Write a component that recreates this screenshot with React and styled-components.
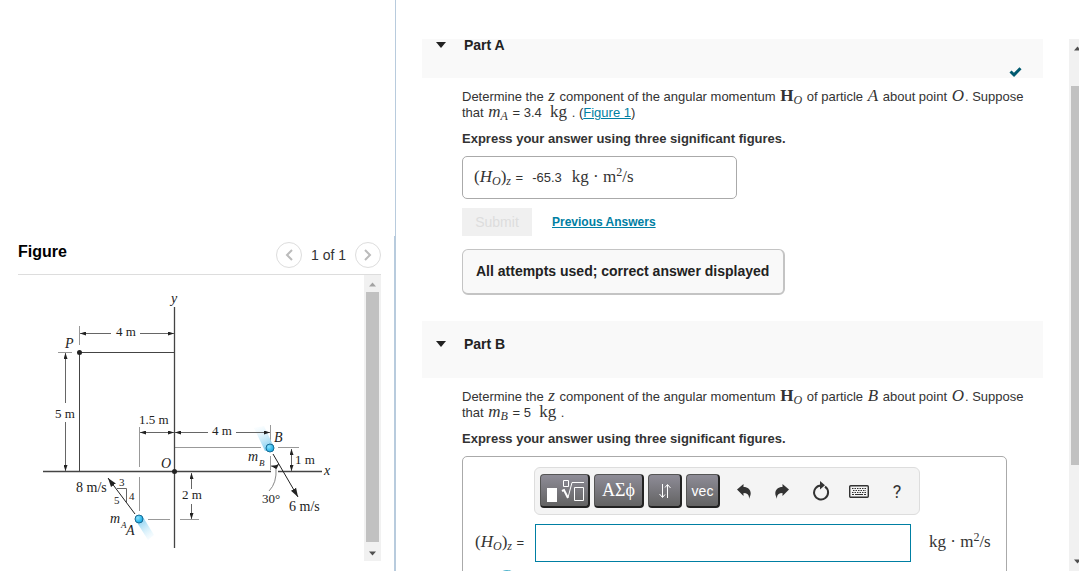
import React, { useState } from "react";
import styled, { createGlobalStyle } from "styled-components";

const GlobalStyle = createGlobalStyle`
  * {
    box-sizing: border-box;
  }

  body {
    margin: 0;
    background: #fff;
    color: #333;
    font-family: "Liberation Sans", Arial, sans-serif;
    font-size: 13px;
    line-height: 16px;
    overflow: hidden;
  }
`;

const Page = styled.div`
  display: flex;
  height: 100vh;
  padding-right: 4px;
  overflow: hidden;
`;

const FigurePane = styled.aside`
  flex: 0 0 396px;
  display: flex;
  flex-direction: column;
  border-right: 1px solid #b8cbdd;
  padding-top: 236px;
`;

const FigureBody = styled.div`
  flex: 1;
  display: flex;
  flex-direction: column;
  padding: 0 13px 10px 18px;
  border-right: 1px solid #b8cbdd;
`;

const FigureHeader = styled.header`
  display: flex;
  align-items: center;
  justify-content: space-between;
  height: 39px;
  border-bottom: 1px solid #ddd;
`;

const FigureTitle = styled.h2`
  margin: 0;
  padding-bottom: 6px;
  color: #000;
  font-size: 16px;
  line-height: 20px;
`;

const Pager = styled.nav`
  display: flex;
  align-items: center;
  gap: 9px;
  font-size: 14px;
`;

const PagerButton = styled.button`
  width: 26px;
  height: 26px;
  display: grid;
  place-items: center;
  padding: 0;
  border: 1px solid #ddd;
  border-radius: 50%;
  background: #fff;
`;

const FigureScroll = styled.div`
  flex: 1;
  display: flex;
  justify-content: space-between;
`;

const Diagram = styled.svg`
  width: 345px;
  height: 285px;
  flex: none;
  font-family: "Liberation Serif", "Times New Roman", serif;
  font-size: 13px;
  fill: #222;
`;

const ScrollTrack = styled.div`
  width: 17px;
  flex: none;
  display: flex;
  flex-direction: column;
  align-items: center;
  background: #f1f1f1;
  padding: 7px 2px 5px;
`;

const PageScrollTrack = styled(ScrollTrack)`
  width: 10px;
  align-items: flex-end;
  margin-top: 39px;
  padding: 7px 0 7px 2px;
`;

const ScrollThumb = styled.div`
  width: 100%;
  flex: 1;
  margin: ${(props) => props.gap};
  background: #c1c1c1;
`;

const ScrollArrow = styled.svg`
  height: 5px;
  flex: none;
  fill: ${(props) => (props.$muted ? "#a3a3a3" : "#505050")};
`;

const Content = styled.main`
  flex: 1;
  min-width: 0;
  padding: 39px 26px 0;
`;

const Part = styled.section`
  margin-bottom: 26px;
`;

const PartHeader = styled.header`
  display: flex;
  align-items: flex-start;
  justify-content: space-between;
  height: ${(props) => (props.$cut ? 39 : 57)}px;
  padding: ${(props) => (props.$cut ? "0" : "17px")} 21px 0 14px;
  background: #f9f9f9;
`;

const PartToggle = styled.button`
  display: flex;
  align-items: center;
  gap: 18px;
  padding: 0;
  border: 0;
  background: none;
  color: #222;
  font: bold 14px/12px "Liberation Sans", Arial, sans-serif;
`;

const DoneMark = styled.svg`
  align-self: flex-end;
  margin-bottom: 1px;
`;

const PartBody = styled.div`
  padding: 11px 16px 0 40px;
`;

const Question = styled.p`
  margin: 0 0 10px;
`;

const Instruction = styled.p`
  margin: 0 0 9px;
  font-weight: bold;
`;

const MathText = styled.span`
  margin: 0 1px;
  font-family: "Liberation Serif", "Times New Roman", serif;
  font-size: 17px;
  line-height: 14px;
  white-space: nowrap;

  sub,
  sup {
    font-size: 12px;
    line-height: 0;
  }

  sub {
    vertical-align: -3px;
  }

  sup {
    vertical-align: 6px;
  }
`;

const Link = styled.a`
  color: #007fa3;
`;

const HistoryLink = styled(Link)`
  font-size: 12px;
  font-weight: bold;
`;

const AnswerBox = styled.div`
  display: flex;
  align-items: baseline;
  gap: 9px;
  width: 275px;
  padding: 13px 10px 12px;
  border: 1px solid #aaa;
  border-radius: 5px;
`;

const Actions = styled.div`
  display: flex;
  align-items: center;
  gap: 20px;
  margin: 9px 0 13px;
`;

const SubmitButton = styled.button`
  width: 70px;
  height: 28px;
  padding: 0;
  border: 0;
  background: #f0f0f0;
  color: #ddd;
  font: 14px "Liberation Sans", Arial, sans-serif;
`;

const Notice = styled.div`
  width: fit-content;
  padding: 14px 14px 15px 13px;
  border: 1px solid #c4c4c4;
  border-right-width: 2px;
  border-bottom-width: 2px;
  border-radius: 6px;
  background: #f9f9f9;
  color: #222;
  font-size: 14px;
  font-weight: bold;
  line-height: 14px;
`;

const Editor = styled.form`
  display: grid;
  grid-template-columns: 61px 1fr 79px;
  align-items: center;
  row-gap: 8px;
  max-width: 545px;
  padding: 10px 16px 12px 11px;
  border: 1px solid #aaa;
  border-radius: 5px;
`;

const Toolbar = styled.div`
  grid-column: 2 / 4;
  display: flex;
  align-items: center;
  gap: 4px;
  width: 386px;
  height: 48px;
  margin: 0 0 1px -1px;
  padding: 0 5px;
  border: 1px solid #ddd;
  border-radius: 6px;
  background: #f4f4f4;
`;

const PaletteButton = styled.button`
  width: ${(props) => (props.$wide ? 50 : 34)}px;
  height: 34px;
  display: grid;
  place-items: center;
  padding: 0;
  border: 1px solid #555;
  border-right: 2px solid #222;
  border-bottom: 2px solid #222;
  border-radius: 4px;
  background: linear-gradient(#8e8c97, #636363);
  color: #fff;
  font: ${(props) => (props.$serif ? '18px "Liberation Serif"' : '14px "Liberation Sans"')}, sans-serif;
`;

const Tools = styled.div`
  display: flex;
  flex: 1;
  justify-content: space-between;
  padding: 0 5px 0 8px;
`;

const ToolButton = styled.button`
  width: 24px;
  height: 24px;
  display: grid;
  place-items: center;
  padding: 0;
  border: 0;
  background: none;
  color: #333;
  font: 18px Roboto, "Liberation Sans", sans-serif;
`;

const AnswerInput = styled.input`
  width: 100%;
  height: 38px;
  padding: 0 8px;
  border: 1px solid #007fa3;
  background: #fff;
  font: 16px "Liberation Serif", serif;
  outline: 0;
`;

const Unit = styled.span`
  padding-left: 17px;
`;

const HintButton = styled.button`
  width: 20px;
  height: 20px;
  margin-left: 23px;
  padding: 0;
  border: 0;
  border-radius: 50%;
  background: #4fb3cc;
`;

const Arrow = ({ up, muted, width = 7 }) => (
  <ScrollArrow width={width} viewBox={`0 0 ${width} 5`} $muted={muted} aria-hidden="true">
    <path d={up ? "M0 4.5 3.5 0.5 7 4.5z" : "M0 0.5h7L3.5 4.5z"} />
  </ScrollArrow>
);

const Caret = () => (
  <svg width="10" height="6" viewBox="0 0 10 6" aria-hidden="true">
    <path d="M0 0h10L5 6z" fill="#222" />
  </svg>
);

const Momentum = () => (
  <span>
    <MathText>
      (<i>H</i>
      <sub><i>O</i></sub>)<sub><i>z</i></sub>
    </MathText>{" "}
    =
  </span>
);

const MomentumUnit = () => (
  <MathText>
    kg · m<sup>2</sup>/s
  </MathText>
);

const FigureDiagram = () => (
  <Diagram viewBox="18 275 345 285" role="img" aria-label="Figure 1">
    <defs>
      <marker id="tip" viewBox="0 0 6 4" refX="6" refY="2" markerWidth="6" markerHeight="4" markerUnits="userSpaceOnUse" orient="auto-start-reverse">
        <path d="M0 0 6 2 0 4z" fill="#222" />
      </marker>
      <marker id="head" viewBox="0 0 9 6" refX="9" refY="3" markerWidth="9" markerHeight="7" markerUnits="userSpaceOnUse" orient="auto">
        <path d="M0 0 9 3 0 6z" fill="#222" />
      </marker>
      <linearGradient id="trailA" gradientUnits="userSpaceOnUse" x1="139" y1="519" x2="152" y2="538">
        <stop offset="0" stopColor="#7fcdf0" />
        <stop offset="1" stopColor="#e8f7fd" stopOpacity="0.3" />
      </linearGradient>
      <linearGradient id="trailB" gradientUnits="userSpaceOnUse" x1="270" y1="448" x2="260" y2="427">
        <stop offset="0" stopColor="#7fcdf0" />
        <stop offset="1" stopColor="#e8f7fd" stopOpacity="0.3" />
      </linearGradient>
      <radialGradient id="ball" cx="0.35" cy="0.35" r="0.7">
        <stop offset="0" stopColor="#8ee3ff" />
        <stop offset="1" stopColor="#08a4e0" />
      </radialGradient>
    </defs>

    <g fill="none" stroke="#999">
      <path d="M79.5 326v19M58 352.5h14M139.5 427v40M139.5 477v34M148 519.5h22M180 519.5h19" />
      <path d="M175 447.5h86M270.5 425v17M270.5 456v14M278 447.5h21" />
    </g>
    <g fill="none" stroke="#444">
      <path d="M174.5 307v241M43 471.5h228M278 471.5h44" strokeWidth="1.3" />
      <path d="M79.5 352v119M79.5 352.5h95" />
    </g>
    <path d="m136 521 7-4 11 18-6 5z" fill="url(#trailA)" />
    <path d="m265 451 9-4-10-21-10 2z" fill="url(#trailB)" />
    <g fill="none" stroke="#666">
      <path d="M140 333.5h34" markerEnd="url(#tip)" />
      <path d="M111 333.5H80" markerEnd="url(#tip)" />
      <path d="M65.5 403v-50" markerEnd="url(#tip)" />
      <path d="M65.5 422v49" markerEnd="url(#tip)" />
      <path d="M140 432.5h34" markerStart="url(#tip)" markerEnd="url(#tip)" />
      <path d="M208 432.5h-33" markerEnd="url(#tip)" />
      <path d="M236 432.5h34" markerEnd="url(#tip)" />
      <path d="M191.5 489v-16" markerEnd="url(#tip)" />
      <path d="M191.5 504v15" markerEnd="url(#tip)" />
      <path d="M291.5 449v22" markerStart="url(#tip)" markerEnd="url(#tip)" />
      <path d="M117 488.5h9.5v14" />
      <path d="M271 466q5 1 8-2" markerStart="url(#tip)" markerEnd="url(#tip)" />
      <path d="M276 468q1 15-7 23" stroke="#888" />
    </g>
    <path d="m135 514-27-36" stroke="#222" markerEnd="url(#head)" />
    <path d="m273 454 25 43" stroke="#222" markerEnd="url(#head)" />
    <circle cx="79.5" cy="352.5" r="2.5" />
    <circle cx="174.5" cy="471.5" r="2.5" />
    <circle cx="139" cy="519" r="4" fill="url(#ball)" stroke="#1b6c94" />
    <circle cx="270" cy="448" r="4" fill="url(#ball)" stroke="#1b6c94" />

    <text x="116" y="336">4 m</text>
    <text x="55" y="418">5 m</text>
    <text x="139" y="424">1.5 m</text>
    <text x="212" y="435">4 m</text>
    <text x="295" y="464">1 m</text>
    <text x="182" y="499">2 m</text>
    <g fontSize="14">
      <text x="76" y="492">8 m/s</text>
      <text x="289" y="511">6 m/s</text>
    </g>
    <text x="262" y="503">30°</text>
    <g fontSize="11">
      <text x="119" y="486">3</text>
      <text x="129" y="500">4</text>
      <text x="114" y="504">5</text>
    </g>
    <g fontStyle="italic" fontSize="14">
      <text x="171" y="303">y</text>
      <text x="65" y="348">P</text>
      <text x="161" y="468">O</text>
      <text x="274" y="442">B</text>
      <text x="324" y="475">x</text>
      <text x="126" y="535">A</text>
      <text x="110" y="523">m</text>
      <text x="248" y="461">m</text>
      <text x="121" y="528" fontSize="9">A</text>
      <text x="259" y="466" fontSize="9">B</text>
    </g>
  </Diagram>
);

const PartQuestion = ({ particle, mass, children }) => (
  <>
    <Question>
      Determine the <MathText><i>z</i></MathText> component of the angular momentum{" "}
      <MathText><b>H</b><sub><i>O</i></sub></MathText> of particle{" "}
      <MathText><i>{particle}</i></MathText> about point <MathText><i>O</i></MathText>. Suppose that{" "}
      <MathText><i>m</i><sub><i>{particle}</i></sub></MathText> = {mass} &nbsp;<MathText>kg</MathText> .{children}
    </Question>
    <Instruction>Express your answer using three significant figures.</Instruction>
  </>
);

const EquationToolbar = () => (
  <Toolbar>
    <PaletteButton type="button" $wide aria-label="Templates">
      <svg width="38" height="24" viewBox="0 0 38 24" fill="none" stroke="#fff">
        <path d="M1 9h10v14H1z" fill="#fff" stroke="none" />
        <path d="M17.5 1.5h5v6h-5zM28.5 8.5h9v13h-9zM22 18.5l4-15h12" />
        <path d="m16 12 2-1 4 8" strokeWidth="2" />
      </svg>
    </PaletteButton>
    <PaletteButton type="button" $wide $serif>ΑΣϕ</PaletteButton>
    <PaletteButton type="button" aria-label="Arrows">
      <svg width="14" height="16" viewBox="0 0 14 16" fill="none" stroke="#fff">
        <path d="M4.5 1v13M1.5 11l3 3.5L7 11.5M9.5 15V2M7 4.5l2.5-3 3 3.5" />
      </svg>
    </PaletteButton>
    <PaletteButton type="button">vec</PaletteButton>
    <Tools>
      <ToolButton type="button" aria-label="Undo">
        <svg width="14" height="15" viewBox="0 0 14 15" fill="#333">
          <path d="M0 5.5 6.5 0v3c5 0 8 3.5 7 8L12 15c.5-4-1.5-6-5.5-6v3z" />
        </svg>
      </ToolButton>
      <ToolButton type="button" aria-label="Redo">
        <svg width="14" height="15" viewBox="0 0 14 15" fill="#333">
          <path d="M14 5.5 7.5 0v3c-5 0-8 3.5-7 8L2 15c-.5-4 1.5-6 5.5-6v3z" />
        </svg>
      </ToolButton>
      <ToolButton type="button" aria-label="Reset">
        <svg width="18" height="20" viewBox="0 0 18 20" fill="none">
          <path d="M13 5.7A7 7 0 1 1 9 4.5" stroke="#333" strokeWidth="2" />
          <path d="m8 0 5 4.3L8 8.5z" fill="#333" />
        </svg>
      </ToolButton>
      <ToolButton type="button" aria-label="Keyboard">
        <svg width="20" height="13" viewBox="0 0 20 13" fill="none" stroke="#333">
          <rect x="0.7" y="0.7" width="18.6" height="11.6" rx="1" strokeWidth="1.4" />
          <path d="M3 3.5h14M4 5.5h13M3 7.5h14" strokeDasharray="1.5 1" />
          <path d="M3 9.5h2M6 9.5h8M15 9.5h2" />
        </svg>
      </ToolButton>
      <ToolButton type="button" aria-label="Help">?</ToolButton>
    </Tools>
  </Toolbar>
);

const App = () => {
  const [answer, setAnswer] = useState("");

  return (
    <Page>
      <GlobalStyle />
      <FigurePane>
        <FigureBody>
          <FigureHeader>
            <FigureTitle>Figure</FigureTitle>
            <Pager>
              <PagerButton aria-label="Previous figure">
                <svg width="8" height="12" viewBox="0 0 8 12" fill="none" stroke="#bbb" strokeWidth="2">
                  <path d="M7 1 2 6l5 5" />
                </svg>
              </PagerButton>
              1 of 1
              <PagerButton aria-label="Next figure">
                <svg width="8" height="12" viewBox="0 0 8 12" fill="none" stroke="#bbb" strokeWidth="2">
                  <path d="m1 1 5 5-5 5" />
                </svg>
              </PagerButton>
            </Pager>
          </FigureHeader>
          <FigureScroll>
            <FigureDiagram />
            <ScrollTrack>
              <Arrow up muted />
              <ScrollThumb gap="5px 0 9px" />
              <Arrow />
            </ScrollTrack>
          </FigureScroll>
        </FigureBody>
      </FigurePane>

      <Content>
        <Part>
          <PartHeader $cut>
            <PartToggle aria-expanded="true">
              <Caret />
              Part A
            </PartToggle>
            <DoneMark width="13" height="10" viewBox="0 0 13 10" role="img" aria-label="Correct">
              <path d="M1.5 4.5 5 7.8 11.5 1.3" fill="none" stroke="#005a70" strokeWidth="3" />
            </DoneMark>
          </PartHeader>
          <PartBody>
            <PartQuestion particle="A" mass="3.4">
              {" "}(<Link href="#figure-1">Figure 1</Link>)
            </PartQuestion>
            <AnswerBox>
              <Momentum />
              <span>-65.3</span>
              <MomentumUnit />
            </AnswerBox>
            <Actions>
              <SubmitButton disabled>Submit</SubmitButton>
              <HistoryLink href="#previous-answers">Previous Answers</HistoryLink>
            </Actions>
            <Notice>All attempts used; correct answer displayed</Notice>
          </PartBody>
        </Part>

        <Part>
          <PartHeader>
            <PartToggle aria-expanded="true">
              <Caret />
              Part B
            </PartToggle>
          </PartHeader>
          <PartBody>
            <PartQuestion particle="B" mass="5" />
            <Editor>
              <EquationToolbar />
              <label htmlFor="answer-b"><Momentum /></label>
              <AnswerInput id="answer-b" value={answer} onChange={(e) => setAnswer(e.target.value)} />
              <Unit><MomentumUnit /></Unit>
              <HintButton type="button" aria-label="Hints" />
            </Editor>
          </PartBody>
        </Part>
      </Content>

      <PageScrollTrack>
        <Arrow up width={5} />
        <ScrollThumb gap="35px 0 94px" />
        <Arrow width={5} />
      </PageScrollTrack>
    </Page>
  );
};

export default App;
